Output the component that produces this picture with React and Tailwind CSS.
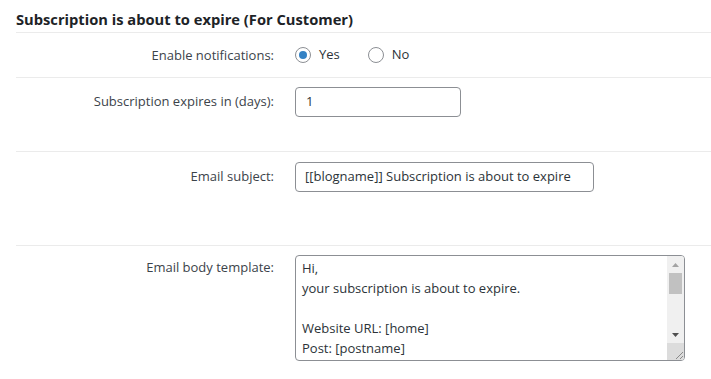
function Radio({ checked }) {
  return (
    <span className="w-4 h-4 rounded-full border border-[#8c8f94] bg-white flex items-center justify-center shrink-0">
      {checked && <span className="w-2 h-2 rounded-full bg-[#3582c4]" />}
    </span>
  );
}

function Row({ label, children, className, labelClass }) {
  return (
    <div className={`flex border-b border-[#ebebeb] ${className}`}>
      <div className={`w-[258px] -ml-4 pl-4 box-content text-right shrink-0 ${labelClass}`}>{label}</div>
      <div className="ml-[21px]">{children}</div>
    </div>
  );
}

function FakeTextarea() {
  const lines = ['Hi,', 'your subscription is about to expire.', '\u00a0', 'Website URL: [home]', 'Post: [postname]'];
  return (
    <div className="w-[390px] h-[106px] border border-[#8c8f94] rounded-[4px] flex overflow-hidden bg-white">
      <div className="flex-1 pl-[6px] pt-[2px] leading-[20px] text-[#2c3338]">
        {lines.map((l, i) => (
          <div key={i}>{l}</div>
        ))}
      </div>
      <div className="w-[17px] bg-[#f0f0f0] flex flex-col">
        <div className="h-[17px] flex items-center justify-center">
          <svg width="7" height="4" viewBox="0 0 7 4"><path d="M3.5 0L7 4H0z" fill="#a3a3a3" /></svg>
        </div>
        <div className="mx-[2px] h-[21px] bg-[#c1c1c1]" />
        <div className="flex-1" />
        <div className="h-[17px] flex items-center justify-center">
          <svg width="7" height="4" viewBox="0 0 7 4"><path d="M0 0h7L3.5 4z" fill="#505050" /></svg>
        </div>
        <div className="h-[17px] bg-[#dcdcdc] flex items-end justify-end">
          <svg width="10" height="10" viewBox="0 0 10 10">
            <path d="M9 2L2 9M9 6L6 9" stroke="#8a8a8a" strokeWidth="1" />
          </svg>
        </div>
      </div>
    </div>
  );
}

export default function App() {
  return (
    <div className="w-[711px] h-[379px] bg-white overflow-hidden font-['Open_Sans',sans-serif] text-[13px] text-[#3c434a]">
      <h2 className="pl-4 pt-[9px] h-[32px] text-[14.7px] leading-[20px] font-bold text-[#1d2327]">
        Subscription is about to expire (For Customer)
      </h2>
      <div className="ml-4 border-t border-[#ebebeb]">
        <Row label="Enable notifications:" className="h-[45px] items-center" labelClass="pt-[2px]">
          <div className="flex items-center">
            <Radio checked />
            <span className="ml-[8px] text-[#2c3338]">Yes</span>
            <span className="ml-[28px]"><Radio /></span>
            <span className="ml-[8px] text-[#2c3338]">No</span>
          </div>
        </Row>
        <Row label="Subscription expires in (days):" className="h-[74px] pt-[9px]" labelClass="pt-[5px]">
          <div className="w-[166px] h-[30px] border border-[#8c8f94] rounded-[4px] px-[10px] flex items-center text-[#2c3338]">1</div>
        </Row>
        <Row label="Email subject:" className="h-[94px] pt-[10px]" labelClass="pt-[5px]">
          <div className="w-[299px] h-[30px] border border-[#8c8f94] rounded-[4px] px-[9px] flex items-center text-[#2c3338]">
            [[blogname]] Subscription is about to expire
          </div>
        </Row>
        <div className="flex pt-[9px]">
          <div className="w-[258px] -ml-4 pl-4 box-content text-right shrink-0 pt-[3px]">Email body template:</div>
          <div className="ml-[21px]">
            <FakeTextarea />
          </div>
        </div>
      </div>
    </div>
  );
}
